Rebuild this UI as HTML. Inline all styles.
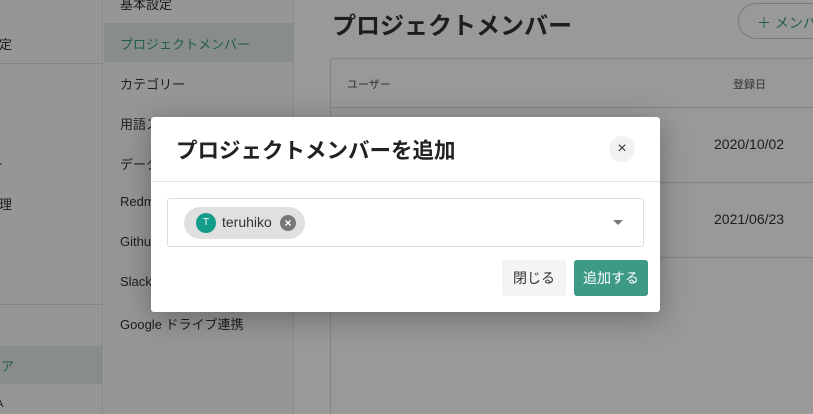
<!DOCTYPE html>
<html><head><meta charset="utf-8"><style>
*{margin:0;padding:0;box-sizing:border-box}
html,body{width:813px;height:414px;overflow:hidden}
body{position:relative;background:#fff;font-family:"Liberation Sans","Noto Sans CJK JP",sans-serif;color:#333}
.a{position:absolute}
.t{font-size:13px;white-space:nowrap}
</style></head><body>
<div class="a" style="left:0;top:0;width:103px;height:414px;background:#fafafa;border-right:1px solid #e6e6e6"></div>
<div class="a" style="left:0;top:63px;width:103px;border-top:1px solid #ddd"></div>
<div class="a" style="left:0;top:304px;width:103px;border-top:1px solid #ddd"></div>
<div class="a" style="left:0;top:346px;width:103px;height:38px;background:#e3ebe8"></div>
<div class="a t" style="left:-14px;top:34px">設定</div>
<div class="a t" style="left:-10px;top:154px">ー</div>
<div class="a t" style="left:-14px;top:194px">管理</div>
<div class="a t" style="left:-12px;top:316px;color:#888">定</div>
<div class="a t" style="left:-12px;top:356px;color:#3d9a86">リア</div>
<div class="a t" style="left:-4px;top:398px;font-size:11px">A</div>

<div class="a" style="left:104px;top:0;width:190px;height:414px;background:#fafafa;border-right:1px solid #e6e6e6"></div>
<div class="a" style="left:104px;top:23px;width:189px;height:39px;background:#e3ebe8"></div>
<div class="a t" style="left:120px;top:-6px">基本設定</div>
<div class="a t" style="left:120px;top:34px;color:#3d9a86">プロジェクトメンバー</div>
<div class="a t" style="left:120px;top:74px">カテゴリー</div>
<div class="a t" style="left:120px;top:114px">用語ス</div>
<div class="a t" style="left:120px;top:154px">データ</div>
<div class="a t" style="left:120px;top:194px">Redmine</div>
<div class="a t" style="left:120px;top:234px">Github</div>
<div class="a t" style="left:120px;top:274px">Slack</div>
<div class="a t" style="left:120px;top:314px">Google ドライブ連携</div>

<div class="a" style="left:332px;top:6px;font-size:24px;font-weight:bold;color:#333;white-space:nowrap">プロジェクトメンバー</div>
<div class="a t" style="left:738px;top:3px;width:75px;height:36px;border:1px solid #ccc;border-right:none;border-radius:18px 0 0 18px;color:#3d9a86;padding:9px 0 0 18px;font-size:14px;overflow:hidden">＋ メンバー</div>
<div class="a" style="left:330px;top:58px;width:483px;height:356px;border:1px solid #ddd;border-right:none;border-bottom:none;border-radius:4px 0 0 0"></div>
<div class="a t" style="left:347px;top:76px;font-size:11px;color:#555">ユーザー</div>
<div class="a t" style="left:733px;top:76px;font-size:11px;color:#555">登録日</div>
<div class="a" style="left:331px;top:107px;width:482px;border-top:1px solid #ddd"></div>
<div class="a" style="left:331px;top:182px;width:482px;border-top:1px solid #ddd"></div>
<div class="a" style="left:331px;top:257px;width:482px;border-top:1px solid #ddd"></div>
<div class="a t" style="left:714px;top:136px;font-size:14px">2020/10/02</div>
<div class="a t" style="left:714px;top:211px;font-size:14px">2021/06/23</div>

<div class="a" style="left:0;top:0;width:813px;height:414px;background:rgba(0,0,0,0.4)"></div>

<div class="a" style="left:151px;top:117px;width:509px;height:195px;background:#fff;border-radius:3px;box-shadow:0 6px 30px rgba(0,0,0,0.3)"></div>
<div class="a" style="left:176px;top:134px;font-size:21.5px;font-weight:bold;color:#222;white-space:nowrap">プロジェクトメンバーを追加</div>
<div class="a" style="left:609px;top:136px;width:26px;height:26px;border-radius:50%;background:#f2f2f2;text-align:center;line-height:26px;font-size:16px;color:#333">×</div>
<div class="a" style="left:151px;top:181px;width:509px;border-top:1px solid #e3e3e3"></div>
<div class="a" style="left:167px;top:198px;width:477px;height:49px;border:1px solid #ddd;border-radius:3px"></div>
<div class="a" style="left:184px;top:207px;width:121px;height:32px;border-radius:16px;background:#e0e0e0"></div>
<div class="a" style="left:196px;top:213px;width:20px;height:20px;border-radius:50%;background:#139c89;color:#fff;font-size:10px;text-align:center;line-height:20px">T</div>
<div class="a t" style="left:222px;top:214px;color:#333;font-size:14px">teruhiko</div>
<div class="a" style="left:280px;top:215px;width:16px;height:16px;border-radius:50%;background:#777;color:#fff;font-size:12px;font-weight:bold;text-align:center;line-height:16px">×</div>
<div class="a" style="left:613px;top:220px;width:0;height:0;border-left:5px solid transparent;border-right:5px solid transparent;border-top:5px solid #777"></div>
<div class="a t" style="left:502px;top:260px;width:64px;height:36px;background:#f4f4f4;border-radius:3px;text-align:center;line-height:36px;color:#333;font-size:14px">閉じる</div>
<div class="a t" style="left:574px;top:260px;width:74px;height:36px;background:#3d9a86;border-radius:3px;text-align:center;line-height:36px;color:#fff;font-size:14px">追加する</div>
</body></html>
